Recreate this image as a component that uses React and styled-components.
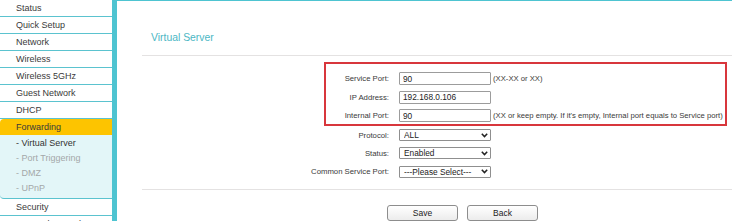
import React from "react";
import styled, { createGlobalStyle } from "styled-components";

const Global = createGlobalStyle`
  html, body { margin: 0; padding: 0; background: #fff; }
  body { font-family: "Liberation Sans", Arial, sans-serif; color: #333; }
  #root { width: 732px; height: 221px; overflow: hidden; }
`;

const TEAL = "#4ec4d1";

const Page = styled.div`
  display: flex;
  width: 732px;
  height: 221px;
  overflow: hidden;
`;

const Sidebar = styled.nav`
  flex: 0 0 112px;
  border-right: 5px solid ${TEAL};
  display: flex;
  flex-direction: column;
  background: #fff;
`;

const MenuItem = styled.div`
  flex: 0 0 auto;
  height: 16px;
  line-height: 16px;
  padding-left: 16px;
  font-size: 9px;
  color: #3a3a3a;
  white-space: nowrap;
  background: ${(p) => (p.$active ? "#fdc400" : "#fff")};
  border-bottom: ${(p) => (p.$active ? "none" : `1px solid #5bc3cf`)};
  border-top-left-radius: ${(p) => (p.$active ? "4px" : "0")};
`;

const SubMenu = styled.div`
  flex: 0 0 auto;
  background: #e3f6f8;
  padding: 1px 0 2px;
  border-bottom: 1px solid #5bc3cf;
  border-bottom-left-radius: 4px;
`;

const SubItem = styled.div`
  height: 15px;
  line-height: 15px;
  padding-left: 16px;
  font-size: 9px;
  white-space: nowrap;
  color: ${(p) => (p.$current ? "#333" : "#a3a8a9")};
`;

const Content = styled.main`
  flex: 1 1 auto;
  border-top: 1px solid ${TEAL};
  padding-left: 25px;
  display: flex;
  flex-direction: column;
  min-width: 0;
  font-size: 8px;
`;

const Header = styled.div`
  height: 55px;
  box-sizing: border-box;
  padding: 30px 0 0 9px;
  border-bottom: 1px solid #e4e2e2;
`;

const Title = styled.h1`
  margin: 0;
  font-weight: normal;
  font-size: 10.4px;
  line-height: 13px;
  color: #4cb7c4;
`;

const Form = styled.div`
  padding-top: 6px;
  display: flex;
  flex-direction: column;
`;

const Highlight = styled.div`
  margin: 0 5px 0 182px;
  border: 2px solid #d8363c;
  padding: 8px 0 2px;
  display: flex;
  flex-direction: column;
  gap: 5.5px;
`;

const Rows = styled.div`
  margin-top: 3px;
  display: flex;
  flex-direction: column;
  gap: 6.4px;
`;

const Row = styled.div`
  display: flex;
  align-items: center;
  height: ${(p) => p.$h}px;
`;

const Label = styled.label`
  flex: 0 0 ${(p) => p.$w}px;
  margin-right: 10px;
  text-align: right;
  white-space: nowrap;
  font-size: 7.75px;
  color: #3a3a3a;
`;

const TextInput = styled.input`
  box-sizing: border-box;
  width: 92px;
  height: 13px;
  margin: 0;
  padding: 0 3px;
  border: 1px solid #9c9c9c;
  border-radius: 1px;
  font-family: "Liberation Sans", Arial, sans-serif;
  font-size: 8.3px;
  color: #222;
  background: #fff;
  outline: none;
`;

const Hint = styled.span`
  margin-left: 2px;
  font-size: 7.7px;
  color: #3a3a3a;
  white-space: nowrap;
`;

const SelectWrap = styled.div`
  position: relative;
  flex: 0 0 92px;
  height: 12px;
  font-size: 0;
`;

const Select = styled.select`
  display: block;
  appearance: none;
  -webkit-appearance: none;
  box-sizing: border-box;
  width: 100%;
  height: 100%;
  margin: 0;
  padding: 0 12px 0 4px;
  border: 1px solid #8f8f8f;
  border-radius: 1px;
  background: #fff;
  font-family: "Liberation Sans", Arial, sans-serif;
  font-size: 8.3px;
  line-height: 10px;
  color: #222;
  outline: none;
`;

const Chevron = styled.svg`
  position: absolute;
  right: 3px;
  top: 3.5px;
  width: 7px;
  height: 5px;
  pointer-events: none;
`;

const Footer = styled.div`
  margin-top: 11px;
  border-top: 1px solid #e4e2e2;
  padding: 15px 0 0 245px;
  display: flex;
  gap: 9px;
`;

const Button = styled.button`
  box-sizing: border-box;
  width: 71px;
  height: 16px;
  margin: 0;
  padding: 0;
  border: 1px solid #8d8d8d;
  border-radius: 3px;
  background: linear-gradient(#ffffff, #ececec);
  font-family: "Liberation Sans", Arial, sans-serif;
  font-size: 8.5px;
  line-height: 14px;
  color: #222;
`;

function Dropdown({ value }) {
  return (
    <SelectWrap>
      <Select defaultValue={value}>
        <option>{value}</option>
      </Select>
      <Chevron viewBox="0 0 7 5">
        <path d="M0.8 0.8 L3.5 3.6 L6.2 0.8" fill="none" stroke="#222" strokeWidth="1.5" />
      </Chevron>
    </SelectWrap>
  );
}

const menuTop = ["Status", "Quick Setup", "Network", "Wireless", "Wireless 5GHz", "Guest Network", "DHCP"];
const subItems = ["Virtual Server", "Port Triggering", "DMZ", "UPnP"];

export default function App() {
  return (
    <>
      <Global />
      <Page>
        <Sidebar>
          {menuTop.map((m) => (
            <MenuItem key={m}>{m}</MenuItem>
          ))}
          <MenuItem $active>Forwarding</MenuItem>
          <SubMenu>
            {subItems.map((s, i) => (
              <SubItem key={s} $current={i === 0}>- {s}</SubItem>
            ))}
          </SubMenu>
          <MenuItem>Security</MenuItem>
          <MenuItem>Parental Controls</MenuItem>
        </Sidebar>
        <Content>
          <Header>
            <Title>Virtual Server</Title>
          </Header>
          <Form>
            <Highlight>
              <Row $h={13}>
                <Label $w={63}>Service Port:</Label>
                <TextInput defaultValue="90" />
                <Hint>(XX-XX or XX)</Hint>
              </Row>
              <Row $h={13}>
                <Label $w={63}>IP Address:</Label>
                <TextInput defaultValue="192.168.0.106" />
              </Row>
              <Row $h={13}>
                <Label $w={63}>Internal Port:</Label>
                <TextInput defaultValue="90" />
                <Hint>(XX or keep empty. If it's empty, Internal port equals to Service port)</Hint>
              </Row>
            </Highlight>
            <Rows>
              <Row $h={12}>
                <Label $w={247}>Protocol:</Label>
                <Dropdown value="ALL" />
              </Row>
              <Row $h={12}>
                <Label $w={247}>Status:</Label>
                <Dropdown value="Enabled" />
              </Row>
              <Row $h={12}>
                <Label $w={247}>Common Service Port:</Label>
                <Dropdown value="---Please Select---" />
              </Row>
            </Rows>
          </Form>
          <Footer>
            <Button>Save</Button>
            <Button>Back</Button>
          </Footer>
        </Content>
      </Page>
    </>
  );
}
